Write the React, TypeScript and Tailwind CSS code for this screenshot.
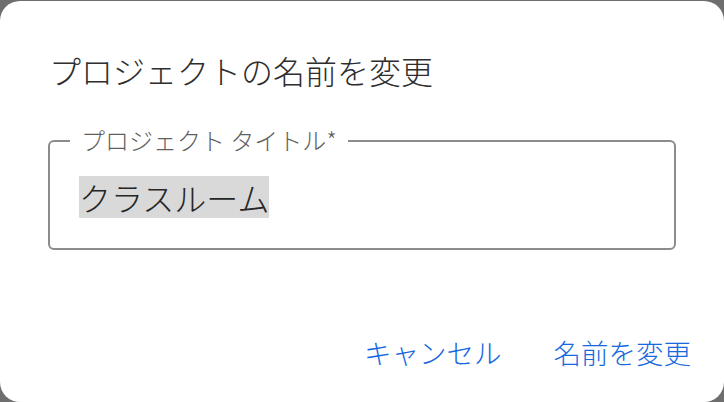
export default function App() {
  return (
    <div className="w-[724px] h-[402px] bg-[#6e6e6e] pt-[1px] overflow-hidden" style={{ fontFamily: '"Noto Sans CJK JP", "Noto Sans", sans-serif' }}>
      <div className="h-[401px] bg-white rounded-[20px] flex flex-col">
        {/* title */}
        <h2 className="pt-[49px] pl-[49px] text-[32px] leading-[40px] text-[#2e2e2e] font-light">
          プロジェクトの名前を変更
        </h2>

        {/* outlined text field */}
        <div className="relative mt-[50px] mx-[48px] h-[110px] border-2 border-[#8c8c8c] rounded-[6px]">
          <span className="absolute left-[20px] -top-[16px] px-[11px] bg-white text-[24px] leading-[28px] text-[#5f5f5f] font-light">
            プロジェクト タイトル*
          </span>
          <div className="pt-[34px] pl-[29px]">
            <span className="inline-block bg-[#d9d9d9] text-[32px] leading-[42px] text-[#262626] font-light">
              クラスルーム
            </span>
          </div>
        </div>

        {/* actions */}
        <div className="mt-[82px] flex justify-end items-center gap-[52px] pr-[33px] text-[27.5px] leading-[40px] text-[#1669e0] font-light">
          <button className="cursor-pointer">キャンセル</button>
          <button className="cursor-pointer">名前を変更</button>
        </div>
      </div>
    </div>
  );
}
